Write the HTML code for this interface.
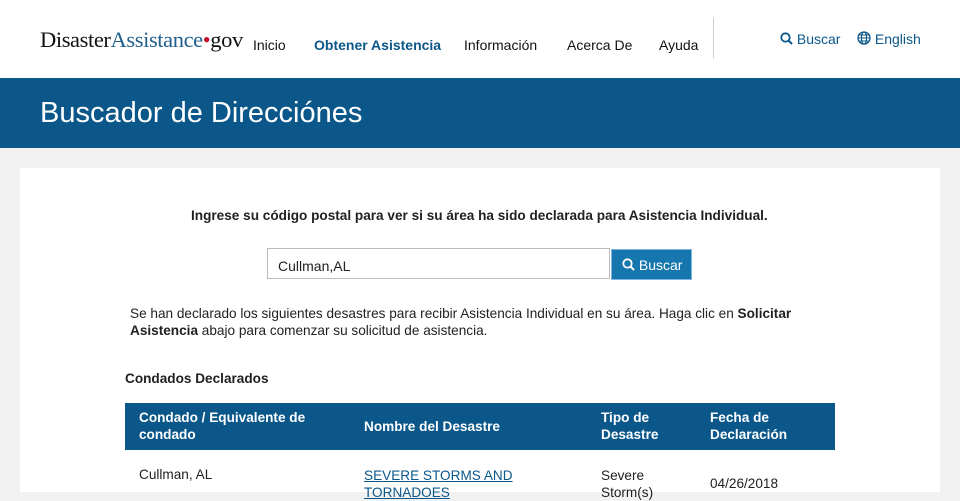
<!DOCTYPE html>
<html><head><style>
body{margin:0;width:960px;height:492px;overflow:hidden;background:#f1f1f1;font-family:"Liberation Sans",Arial,sans-serif;color:#212121;position:relative}
.hdr{position:absolute;left:0;top:0;width:960px;height:78px;background:#fff}
.logo{position:absolute;left:40px;top:27px;font-family:"Liberation Serif",serif;font-size:22.5px;letter-spacing:-0.4px;color:#111}
.logo .a{color:#1f5f8b}.logo .d{color:#c4122f}
.nav{position:absolute;top:37px;font-size:14px;color:#111}
.sep{position:absolute;left:713px;top:18px;width:1px;height:40px;background:#ccc}
.tl{position:absolute;top:31px;font-size:14px;color:#0b578a}
.band{position:absolute;left:0;top:78px;width:960px;height:70px;background:#0b578a}
.band h1{margin:0;position:absolute;left:40px;top:19px;font-size:29px;font-weight:normal;color:#fff}
.card{position:absolute;left:20px;top:168px;width:920px;height:324px;background:#fff}
.t{position:absolute;font-size:13.6px}
.inp{position:absolute;left:267px;top:248px;width:343px;height:31px;border:1px solid #bbb;box-sizing:border-box;font-size:14px;padding:9px 10px}
.btn{position:absolute;left:611px;top:249px;width:81px;height:31px;background:#1577ad;border:1px solid #7fb4df;box-sizing:border-box;color:#fff;font-size:14px;padding:7px 0 0 10px}
.th{position:absolute;left:125px;top:403px;width:710px;height:47px;background:#0b578a}
.th div{position:absolute;color:#fff;font-weight:bold;font-size:13.6px;line-height:17px}
</style></head><body>
<div class="hdr">
<div class="logo">Disaster<span class="a">Assistance</span><span class="d">•</span>gov</div>
<div class="nav" style="left:253px">Inicio</div>
<div class="nav" style="left:314px;color:#0b578a;font-weight:bold">Obtener Asistencia</div>
<div class="nav" style="left:464px">Información</div>
<div class="nav" style="left:567px">Acerca De</div>
<div class="nav" style="left:659px">Ayuda</div>
<div class="sep"></div>
<div class="tl" style="left:780px"><svg width="13" height="13" viewBox="0 0 13 13" style="vertical-align:-1px"><circle cx="5.5" cy="5.5" r="4.2" fill="none" stroke="#0b578a" stroke-width="1.8"/><path d="M8.5 8.5L12 12" stroke="#0b578a" stroke-width="2"/></svg> Buscar</div>
<div class="tl" style="left:857px"><svg width="14" height="14" viewBox="0 0 14 14" style="vertical-align:-1px"><circle cx="7" cy="7" r="6" fill="none" stroke="#0b578a" stroke-width="1.3"/><ellipse cx="7" cy="7" rx="2.6" ry="6" fill="none" stroke="#0b578a" stroke-width="1.1"/><path d="M1 7h12M2 4h10M2 10h10" stroke="#0b578a" stroke-width="1"/></svg> English</div>
</div>
<div class="band"><h1>Buscador de Direcciónes</h1></div>
<div class="card"></div>
<div class="t" style="left:191px;top:208px;font-weight:bold">Ingrese su código postal para ver si su área ha sido declarada para Asistencia Individual.</div>
<div class="inp">Cullman,AL</div>
<div class="btn"><svg width="13" height="13" viewBox="0 0 13 13" style="vertical-align:-1px"><circle cx="5.5" cy="5.5" r="4.2" fill="none" stroke="#fff" stroke-width="1.8"/><path d="M8.5 8.5L12 12" stroke="#fff" stroke-width="2"/></svg> Buscar</div>
<div class="t" style="left:130px;top:305px;width:700px;line-height:17px">Se han declarado los siguientes desastres para recibir Asistencia Individual en su área. Haga clic en <b>Solicitar Asistencia</b> abajo para comenzar su solicitud de asistencia.</div>
<div class="t" style="left:125px;top:371px;font-weight:bold">Condados Declarados</div>
<div class="th">
<div style="left:14px;top:6px">Condado / Equivalente de<br>condado</div>
<div style="left:239px;top:15px">Nombre del Desastre</div>
<div style="left:476px;top:6px">Tipo de<br>Desastre</div>
<div style="left:585px;top:6px">Fecha de<br>Declaración</div>
</div>
<div class="t" style="left:139px;top:467px">Cullman, AL</div>
<div class="t" style="left:364px;top:467px;color:#0b578a;text-decoration:underline;line-height:17px">SEVERE STORMS AND<br>TORNADOES</div>
<div class="t" style="left:601px;top:467px;line-height:17px">Severe<br>Storm(s)</div>
<div class="t" style="left:710px;top:476px">04/26/2018</div>
</body></html>
